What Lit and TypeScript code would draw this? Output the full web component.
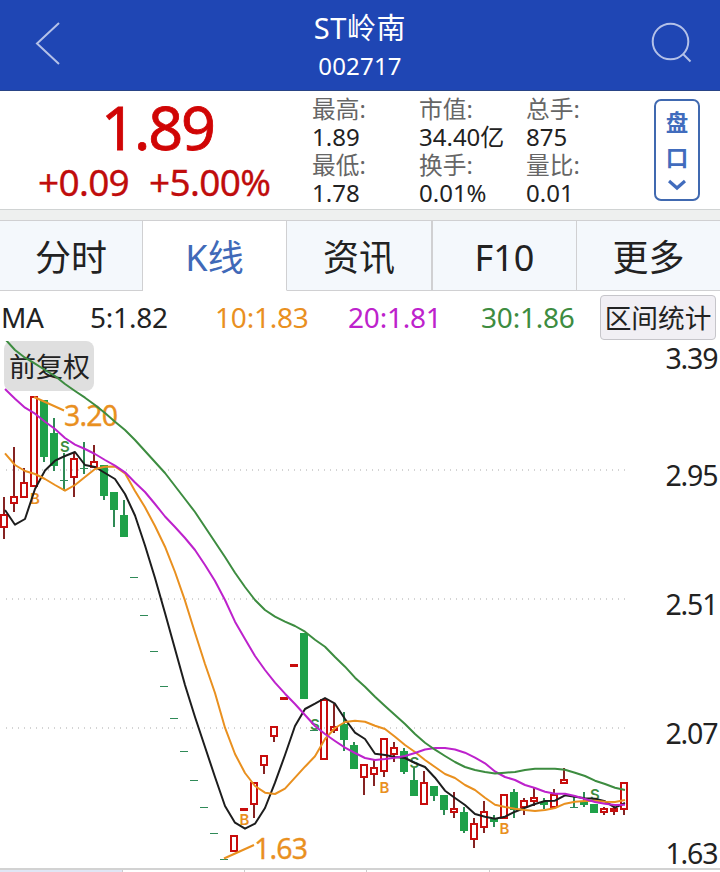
import { LitElement, html, svg, css } from "lit";
import { customElement, property } from "lit/decorators.js";
import { classMap } from "lit/directives/class-map.js";

type Candle = ["r" | "g", number, number, number, number];

const TOP = 341;
const STEP = 10;

// [colour, high, body top, body bottom, low], one per trading day
const candles: Candle[] = [
  ["r", 497, 514, 528, 539], ["r", 447, 496, 504, 512], ["r", 468, 482, 498, 498],
  ["r", 396, 396, 487, 487], ["g", 400, 400, 457, 462], ["g", 418, 433, 466, 471],
  ["g", 453, 480, 481, 491], ["r", 452, 458, 478, 497], ["g", 442, 468, 469, 474],
  ["r", 445, 461, 468, 468], ["g", 465, 465, 496, 500], ["g", 492, 492, 510, 527],
  ["g", 500, 515, 537, 537], ["g", 577, 577, 578, 578], ["g", 615, 615, 616, 616],
  ["g", 651, 651, 652, 652], ["g", 686, 686, 687, 687], ["g", 718, 718, 719, 719],
  ["g", 751, 751, 752, 752], ["g", 780, 780, 781, 781], ["g", 807, 807, 808, 808],
  ["g", 833, 833, 834, 834], ["g", 859, 859, 860, 860], ["r", 835, 835, 852, 852],
  ["r", 808, 808, 811, 811], ["r", 782, 782, 805, 818], ["r", 755, 755, 766, 774],
  ["r", 726, 726, 737, 742], ["r", 697, 697, 700, 700], ["r", 664, 664, 667, 667],
  ["g", 633, 633, 699, 699], ["g", 730, 730, 731, 731], ["r", 699, 699, 760, 760],
  ["r", 704, 726, 731, 733], ["g", 712, 724, 740, 751], ["g", 742, 745, 769, 769],
  ["r", 764, 764, 778, 795], ["r", 760, 767, 775, 786], ["r", 738, 738, 772, 777],
  ["r", 742, 747, 755, 762], ["g", 748, 751, 772, 774], ["g", 768, 780, 796, 796],
  ["r", 771, 782, 805, 805], ["g", 786, 786, 796, 801], ["g", 795, 795, 810, 815],
  ["r", 792, 808, 813, 818], ["g", 807, 812, 831, 833], ["r", 818, 823, 840, 848],
  ["r", 801, 811, 828, 833], ["g", 815, 819, 822, 827], ["r", 794, 794, 819, 819],
  ["g", 789, 792, 810, 818], ["r", 798, 800, 808, 815], ["r", 788, 797, 802, 806],
  ["g", 798, 802, 805, 809], ["r", 789, 794, 808, 808], ["r", 768, 779, 784, 784],
  ["g", 797, 807, 808, 808], ["g", 792, 801, 805, 807], ["g", 804, 804, 813, 813],
  ["r", 807, 808, 813, 815], ["r", 807, 808, 812, 815], ["r", 782, 782, 810, 815],
];

const ma5 = [
  510, 524.7, 519, 489, 470.5, 460.7, 456, 452, 465, 467, 473, 479, 494, 515.5, 545.5, 578, 613, 649,
  685, 717, 747, 777, 806, 822.7, 828.7, 823.7, 808, 782.7, 755, 726, 709, 703.7, 698, 703.7, 719,
  732.7, 739, 753.7, 755, 757, 758, 763, 767, 777.7, 790.7, 798, 805, 814, 816.7, 818.7, 816.7,
  811.7, 807.7, 804, 801, 800.7, 795.3, 796.7, 798.3, 798.7, 801.3, 807.7, 803,
];
const ma10 = [
  453.3, 465, 471, 474, 479, 485, 490.7, 485, 477, 469, 466.7, 466.5, 473.3, 491, 507.3, 526, 546.7,
  572, 600.7, 632.7, 664, 693, 727.7, 754, 773, 786, 792.7, 794, 788.7, 777.7, 766.7, 756.3, 739,
  728, 722, 720.7, 721.7, 725.7, 729, 736.7, 745, 752, 760, 767, 774, 778, 785, 790, 797.7, 804.8,
  807, 808.7, 810, 811, 810, 808, 803.7, 801.7, 801, 800.7, 801.7, 802, 800,
];
const ma20 = [
  389, 398.7, 407.7, 413.7, 421.7, 429, 438, 444.7, 449, 454, 460, 465.7, 472.3, 482.5, 492, 504,
  516.5, 527, 538, 550, 565, 581, 600, 621.7, 639, 656, 670, 682.7, 693.7, 704, 715, 726, 734, 741,
  747.7, 753, 758, 760, 759, 757.7, 756, 753, 749.5, 748, 748, 749.5, 752.7, 757.7, 763.3, 771.5,
  777, 780, 785, 788, 791.7, 793.7, 793.7, 796, 799, 802, 803.7, 805, 804.7,
];
const ma30 = [
  339, 350, 357.7, 363.7, 370, 376, 384, 391, 397.7, 405, 413, 421.7, 430, 440, 451, 462, 473, 486,
  499, 512, 527, 542, 557, 572.7, 587, 600, 610, 616.7, 621.7, 626, 631.7, 639.7, 646.7, 657, 666.7,
  677.7, 686.7, 696.7, 706, 715, 724, 734, 742.7, 749.7, 756, 762, 767, 770, 772, 773.5, 772.7, 772,
  770, 768.7, 768.7, 768.7, 769.7, 772.7, 776, 780.7, 784, 787.7, 790,
];

const signals = [
  ["B", 35, 504], ["S", 65, 452], ["B", 244.5, 824.5], ["S", 315, 730], ["B", 384.5, 792.5],
  ["S", 414.5, 767.5], ["B", 504.5, 833.5], ["S", 595, 800],
] as const;

const axis = [["3.39", 369], ["2.95", 486], ["2.51", 615], ["2.07", 744], ["1.63", 864]] as const;

const line = (ys: number[]) => ys.map((y, i) => `${5 + i * STEP},${y}`).join(" ");

@customElement("k-chart")
export class KChart extends LitElement {
  static styles = css`
    :host { display: block; height: 527px; }
    svg { display: block; font-family: "Noto Sans", "Noto Sans CJK SC", sans-serif; }
    .grid { stroke: #c6c6c6; stroke-width: 1.4; stroke-dasharray: 1 5; }
    .chip { fill: #dfdfdf; }
    .chip-text { fill: #222; font: 27px "Noto Sans CJK SC", sans-serif; }
    .body-r { fill: none; stroke: #c80d0d; stroke-width: 2; }
    .dash-r { fill: #c80d0d; }
    .body-g { fill: #1fa149; }
    .dash-g { fill: #2f8a58; }
    .wick-r { fill: #852322; }
    .wick-g { fill: #2f8a55; }
    .ma { fill: none; stroke-width: 2; stroke-linejoin: round; }
    .ma5 { stroke: #1d1d1d; }
    .ma10 { stroke: #e9901f; }
    .ma20 { stroke: #bd22cc; }
    .ma30 { stroke: #3d8c40; }
    .sig { font-family: Inter, sans-serif; font-size: 15px; font-weight: 600; text-anchor: middle; }
    .sig-B { fill: #e9901f; }
    .sig-S { fill: #3d8c40; }
    .lead { stroke: #e9901f; stroke-width: 2; }
    .callout { fill: #e9901f; stroke: #e9901f; stroke-width: 0.3; font-size: 28.5px; }
    .axis { fill: #222; font-size: 28.5px; }
  `;

  private candle([c, high, top, bottom, low]: Candle, i: number) {
    const x = 4 + i * STEP;
    const h = bottom - top;
    const body =
      c === "r"
        ? h <= 3
          ? svg`<rect class="dash-r" x=${x - 4} y=${top} width="8" height=${h}/>`
          : svg`<rect class="body-r" x=${x - 3} y=${top + 1} width="6" height=${h - 2}/>`
        : svg`<rect class=${h <= 1 ? "dash-g" : "body-g"} x=${x - 4} y=${top} width="8" height=${h}/>`;
    return svg`
      ${top > high ? svg`<rect class="wick-${c}" x=${x - 1} y=${high} width="2" height=${top - high}/>` : ""}
      ${low > bottom ? svg`<rect class="wick-${c}" x=${x - 1} y=${bottom} width="2" height=${low - bottom}/>` : ""}
      ${body}`;
  }

  render() {
    return html`<svg width="720" height="527" viewBox="0 ${TOP} 720 527">
      ${[470, 599, 728].map((y) => svg`<line class="grid" x1="6" x2="626" y1=${y} y2=${y}/>`)}
      <rect class="chip" x="4" y="341" width="90" height="50" rx="8"/>
      <text class="chip-text" x="9" y="376.5">前复权</text>
      ${candles.map((c, i) => this.candle(c, i))}
      ${signals.map(([t, x, y]) => svg`<text class="sig sig-${t}" x=${x} y=${y}>${t}</text>`)}
      <line class="lead" x1="34" y1="397" x2="64" y2="410.5"/>
      <text class="callout" x="64" y="425.5" textLength="54">3.20</text>
      <line class="lead" x1="224" y1="858.5" x2="254" y2="845"/>
      <text class="callout" x="254" y="858.5" textLength="54">1.63</text>
      <polyline class="ma ma5" points=${line(ma5)}/>
      <polyline class="ma ma10" points=${line(ma10)}/>
      <polyline class="ma ma20" points=${line(ma20)}/>
      <polyline class="ma ma30" points=${line(ma30)}/>
      ${axis.map(([t, y]) => svg`<text class="axis" x="665.5" y=${y} textLength="53">${t}</text>`)}
    </svg>`;
  }
}

@customElement("stock-header")
export class StockHeader extends LitElement {
  static styles = css`
    :host {
      display: grid; grid-template-columns: 100px 1fr 100px; height: 91px; box-sizing: border-box;
      background: #1f46b4; border-bottom: 1px solid #294486; color: #fff;
    }
    .mid { text-align: center; padding-top: 8px; }
    .name { font-size: 29px; line-height: 40px; letter-spacing: 0.6px; }
    .code { font-size: 24px; line-height: 36px; letter-spacing: 0.2px; }
    svg { display: block; fill: none; stroke: #b4c1e8; stroke-width: 2; }
  `;
  render() {
    return html`
      <svg width="100" height="90"><path d="M59 23 37 43.5 59 64"/></svg>
      <div class="mid"><div class="name">ST岭南</div><div class="code">002717</div></div>
      <svg width="100" height="90"><circle cx="50.5" cy="41.5" r="17.8"/><path d="m63 54 7.5 7.5"/></svg>`;
  }
}

@customElement("quote-panel")
export class QuotePanel extends LitElement {
  static styles = css`
    :host { display: flex; height: 118px; background: #fff; }
    .price { width: 312px; color: #d00505; text-align: center; flex: none; }
    .last { font-size: 61px; line-height: 71px; height: 75px; letter-spacing: -2px; padding-left: 3px; -webkit-text-stroke: 0.8px #d00505; }
    .chg { display: flex; gap: 20px; padding-left: 38px; font-size: 37px; line-height: 32px; letter-spacing: -0.7px; color: #c00c0c; -webkit-text-stroke: 0.3px #c00c0c; }
    .stats { display: grid; grid-template-columns: repeat(3, 107px); grid-auto-rows: 56px; padding-top: 4px; flex: none; }
    .label, .value { font-size: 24px; line-height: 28px; white-space: nowrap; }
    .label { color: #666; font-size: 23.7px; }
    .value { color: #222; }
    .btn {
      box-sizing: border-box; width: 46px; height: 102px; margin: 8px 0 0 21px; border: 2px solid #4069b0;
      border-radius: 7px; color: #416cbd; font-size: 22.5px; font-weight: 700; line-height: 35px;
      display: flex; flex-direction: column; align-items: center; padding-top: 4px;
    }
    svg { display: block; fill: none; stroke: #416cbd; stroke-width: 3.2; margin-top: 4px; }
  `;
  render() {
    const stats = [
      ["最高:", "1.89"], ["市值:", "34.40亿"], ["总手:", "875"],
      ["最低:", "1.78"], ["换手:", "0.01%"], ["量比:", "0.01"],
    ];
    return html`
      <div class="price">
        <div class="last">1.89</div>
        <div class="chg"><span>+0.09</span><span>+5.00%</span></div>
      </div>
      <div class="stats">
        ${stats.map(([l, v]) => html`<div><div class="label">${l}</div><div class="value">${v}</div></div>`)}
      </div>
      <div class="btn"><span>盘</span><span>口</span>
        <svg width="18" height="12"><path d="m1 2 8 7 8-7"/></svg>
      </div>`;
  }
}

@customElement("tab-strip")
export class TabStrip extends LitElement {
  @property({ type: Number }) active = 1;
  static styles = css`
    :host {
      display: block; box-sizing: border-box; border-top: 1px solid #d0d3d3; background: #fff; height: 82px;
    }
    .gap { height: 10px; background: #eef0ef; }
    .tabs { display: grid; grid-template-columns: 143px 144px 145px 145px 143px; height: 71px; }
    .tab {
      box-sizing: border-box; border: 1px solid #d0d0d2; border-left: 0; background: #f4f8fc; color: #222;
      font-size: 36px; line-height: 73px; text-align: center; height: 71px; overflow: hidden;
    }
    .tab:last-child { border-right: 0; }
    .on { background: #fff; border-bottom-color: #fff; color: #4069b8; }
    .tab:nth-child(4) { border-left: 1px solid #d0d0d2; }
  `;
  render() {
    return html`<div class="gap"></div><div class="tabs">
      ${["分时", "K线", "资讯", "F10", "更多"].map(
        (t, i) => html`<div class=${classMap({ tab: true, on: i === this.active })}>${t}</div>`
      )}
    </div>`;
  }
}

@customElement("ma-legend")
export class MaLegend extends LitElement {
  static styles = css`
    :host { display: flex; height: 50px; font-size: 28px; line-height: 53px; white-space: nowrap; }
    span { flex: none; letter-spacing: -0.3px; }
    .t { width: 90px; padding-left: 1px; box-sizing: border-box; color: #222; letter-spacing: -0.4px; font-size: 28px; }
    .a { width: 125px; color: #222; }
    .b { width: 133px; color: #e9901f; }
    .c { width: 133px; color: #bd22cc; }
    .d { width: 119px; color: #3d8c40; }
    .a, .b, .c, .d { letter-spacing: -0.2px; }
    .btn {
      box-sizing: border-box; width: 116px; height: 45px; margin-top: 4px; border: 1.5px solid #c6c5ca; border-radius: 4px;
      background: #f1eff4; color: #222; font-size: 26.7px; line-height: 44px; text-align: center; letter-spacing: 0;
    }
  `;
  render() {
    return html`<span class="t">MA</span><span class="a">5:1.82</span><span class="b">10:1.83</span
      ><span class="c">20:1.81</span><span class="d">30:1.86</span><span class="btn">区间统计</span>`;
  }
}

@customElement("app-root")
export class AppRoot extends LitElement {
  static styles = css`
    :host {
      display: block; width: 720px; height: 872px; overflow: hidden; background: #fff;
      font-family: "Noto Sans", "Noto Sans CJK SC", sans-serif;
    }
    .foot { display: grid; grid-template-columns: 123px 122px 122px 123px 230px; height: 2px; border-top: 2px solid #d2d2d2; }
    .foot div { border-right: 1px solid #ccc; }
    .foot div:first-child { background: #e0e6f5; }
    .foot div:last-child { border: 0; }
  `;
  render() {
    return html`
      <stock-header></stock-header>
      <quote-panel></quote-panel>
      <tab-strip></tab-strip>
      <ma-legend></ma-legend>
      <k-chart></k-chart>
      <div class="foot"><div></div><div></div><div></div><div></div><div></div></div>`;
  }
}
